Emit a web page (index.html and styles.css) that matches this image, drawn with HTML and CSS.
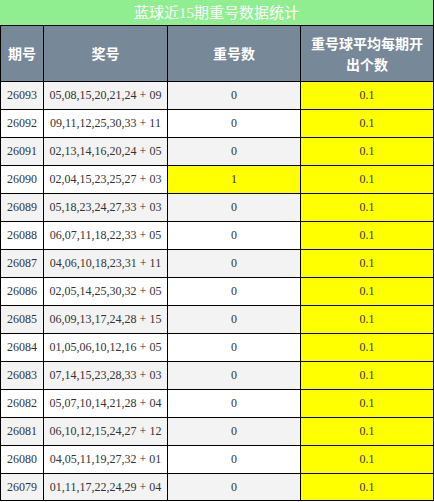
FILE: index.html
```html
<!DOCTYPE html>
<html>
<head>
<meta charset="utf-8">
<link rel="stylesheet" href="styles.css">
</head>
<body>
<table class="stats">
  <colgroup>
    <col class="c1"><col class="c2"><col class="c3"><col class="c4">
  </colgroup>
  <thead>
    <tr><th class="title" colspan="4">蓝球近15期重号数据统计</th></tr>
    <tr class="head">
      <th class="first">期号</th>
      <th>奖号</th>
      <th>重号数</th>
      <th>重号球平均每期开出个数</th>
    </tr>
  </thead>
  <tbody>
    <tr class="odd"><td class="first">26093</td><td>05,08,15,20,21,24 + 09</td><td>0</td><td class="hl">0.1</td></tr>
    <tr><td class="first">26092</td><td>09,11,12,25,30,33 + 11</td><td>0</td><td class="hl">0.1</td></tr>
    <tr class="odd"><td class="first">26091</td><td>02,13,14,16,20,24 + 05</td><td>0</td><td class="hl">0.1</td></tr>
    <tr><td class="first">26090</td><td>02,04,15,23,25,27 + 03</td><td class="hl">1</td><td class="hl">0.1</td></tr>
    <tr class="odd"><td class="first">26089</td><td>05,18,23,24,27,33 + 03</td><td>0</td><td class="hl">0.1</td></tr>
    <tr><td class="first">26088</td><td>06,07,11,18,22,33 + 05</td><td>0</td><td class="hl">0.1</td></tr>
    <tr class="odd"><td class="first">26087</td><td>04,06,10,18,23,31 + 11</td><td>0</td><td class="hl">0.1</td></tr>
    <tr><td class="first">26086</td><td>02,05,14,25,30,32 + 05</td><td>0</td><td class="hl">0.1</td></tr>
    <tr class="odd"><td class="first">26085</td><td>06,09,13,17,24,28 + 15</td><td>0</td><td class="hl">0.1</td></tr>
    <tr><td class="first">26084</td><td>01,05,06,10,12,16 + 05</td><td>0</td><td class="hl">0.1</td></tr>
    <tr class="odd"><td class="first">26083</td><td>07,14,15,23,28,33 + 03</td><td>0</td><td class="hl">0.1</td></tr>
    <tr><td class="first">26082</td><td>05,07,10,14,21,28 + 04</td><td>0</td><td class="hl">0.1</td></tr>
    <tr class="odd"><td class="first">26081</td><td>06,10,12,15,24,27 + 12</td><td>0</td><td class="hl">0.1</td></tr>
    <tr><td class="first">26080</td><td>04,05,11,19,27,32 + 01</td><td>0</td><td class="hl">0.1</td></tr>
    <tr class="odd last"><td class="first">26079</td><td>01,11,17,22,24,29 + 04</td><td>0</td><td class="hl">0.1</td></tr>
  </tbody>
</table>
</body>
</html>
```
FILE: styles.css
```css
html, body {
  margin: 0;
  padding: 0;
  background: #ffffff;
}

.stats {
  width: 434px;
  table-layout: fixed;
  border-collapse: separate;
  border-spacing: 0;
  font-family: "Liberation Serif", "Noto Sans CJK SC", serif;
  font-size: 12px;
  color: #333333;
}

.c1 { width: 44px; }
.c2 { width: 124px; }
.c3 { width: 133px; }
.c4 { width: 133px; }

.stats th,
.stats td {
  box-sizing: border-box;
  border-right: 1px solid #000;
  border-bottom: 1px solid #000;
  text-align: center;
  vertical-align: middle;
  padding: 0 4px;
}

.stats .first {
  border-left: 1px solid #000;
}

.stats .title {
  height: 26px;
  background: #90ee90;
  color: #ffffff;
  font-family: "Liberation Serif", "Noto Sans CJK SC", serif;
  font-weight: normal;
  font-size: 15px;
  line-height: 20px;
  padding: 0;
}

.head th {
  height: 56px;
  background: #778899;
  color: #ffffff;
  font-family: "Noto Sans CJK SC", sans-serif;
  font-weight: bold;
  font-size: 14px;
  line-height: 21px;
  padding: 0 6px;
}

.stats td {
  height: 28px;
  padding: 0 2px;
  background: #ffffff;
  white-space: nowrap;
}

.stats tr.odd td {
  background: #f3f3f3;
}

.stats tr td.hl {
  background: #ffff00;
}

.stats tr.last td {
  height: 27px;
}
```
